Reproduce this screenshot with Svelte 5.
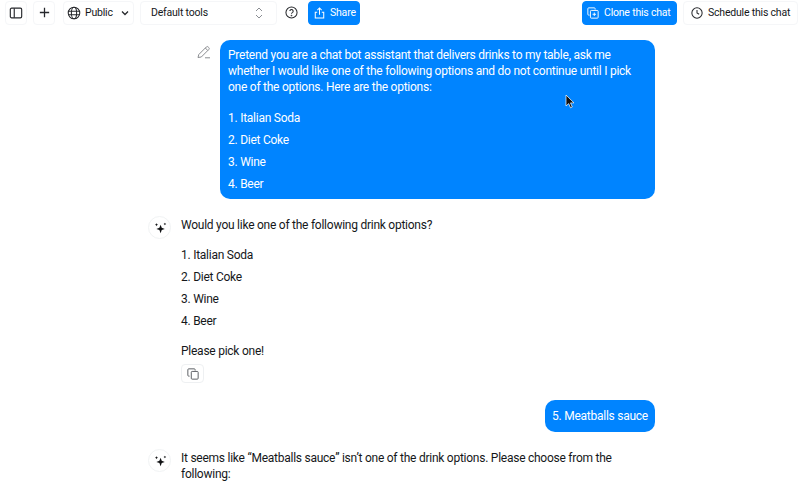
<script>
  const userOptions = ['1. Italian Soda', '2. Diet Coke', '3. Wine', '4. Beer'];
  const spark = 'M6.5 3.2l1 2.6 2.600 1-2.600 1-1 2.600-1-2.600-2.600-1 2.600-1zM3 1.800l.4 1 1 .4-1 .4-.4 1-.4-1-1-.4 1-.4zM10.200 1.400l.35.8.8.35-.8.35-.35.8-.35-.8-.8-.35.8-.35z';
</script>

<div class="page">
  <header class="bar">
    <div class="group">
      <button class="btn square" aria-label="Toggle sidebar">
        <svg width="14" height="14" viewBox="0 0 16 16" fill="none" stroke="#26282c" stroke-width="1.3"><rect x="1.5" y="2.5" width="13" height="11" rx="1.5"/><path d="M6 2.5v11"/></svg>
      </button>
      <button class="btn square plus" aria-label="New chat">
        <svg width="11" height="11" viewBox="0 0 13 13" fill="none" stroke="#26282c" stroke-width="1.5"><path d="M6.5 1v11M1 6.5h11"/></svg>
      </button>
      <button class="btn public">
        <svg width="14" height="14" viewBox="0 0 16 16" fill="none" stroke="#26282c" stroke-width="1.2"><circle cx="8" cy="8" r="6.6"/><ellipse cx="8" cy="8" rx="3" ry="6.6"/><path d="M1.6 6h12.8M1.6 10h12.8"/></svg>
        <span>Public</span>
        <svg class="chev" width="8" height="6" viewBox="0 0 8 6" fill="none" stroke="#26282c" stroke-width="1.3"><path d="M1 1.5l3 3 3-3"/></svg>
      </button>
      <button class="btn tools">
        <span>Default tools</span>
        <svg width="8" height="12" viewBox="0 0 8 12" fill="none" stroke="#8a8d92" stroke-width="1"><path d="M1 4l3-3 3 3M1 8l3 3 3-3"/></svg>
      </button>
      <span class="help" aria-label="Help">
        <svg width="13" height="13" viewBox="0 0 14 14" fill="none" stroke="#26282c" stroke-width="1.1"><circle cx="7" cy="7" r="6"/><path d="M5.2 5.5a1.8 1.8 0 1 1 2.7 1.6c-.6.3-.9.7-.9 1.3"/><circle cx="7" cy="10.2" r=".35"/></svg>
      </span>
      <button class="btn primary share">
        <svg width="11" height="12" viewBox="0 0 13 14" fill="none" stroke="#fff" stroke-width="1.2"><path d="M6.5 9V1.2M4 3.5l2.5-2.4L9 3.5M3.8 6H1.5v7h10V6H9.2"/></svg>
        <span>Share</span>
      </button>
    </div>
    <div class="group right">
      <button class="btn primary clone">
        <svg width="12" height="12" viewBox="0 0 14 14" fill="none" stroke="#fff" stroke-width="1.1"><path d="M9.5 3V2a1 1 0 0 0-1-1H2a1 1 0 0 0-1 1v6.5a1 1 0 0 0 1 1h1"/><rect x="4" y="4" width="9" height="9" rx="1"/><path d="M8.5 6.5v4M6.5 8.5h4"/></svg>
        <span>Clone this chat</span>
      </button>
      <button class="btn schedule">
        <svg width="12" height="12" viewBox="0 0 14 14" fill="none" stroke="#26282c" stroke-width="1.2"><circle cx="7" cy="7" r="6"/><path d="M7 3.5V7l2.5 1.5"/></svg>
        <span>Schedule this chat</span>
      </button>
    </div>
  </header>

  <main class="chat">
    <section class="user first">
      <svg class="edit" width="14" height="14" viewBox="0 0 14 14" fill="none" stroke="#8b8d91" stroke-width="1"><path d="M1 12.5l.8-3L9.3 2a1.3 1.3 0 0 1 1.9 0l.6.6a1.3 1.3 0 0 1 0 1.9L4.3 12zM8.3 3l2.5 2.5M8 12.8h5"/></svg>
      <div class="bubble big">
        <p class="para">Pretend you are a chat bot assistant that delivers drinks to my table, ask me whether I would like one of the following options and do not continue until I pick one of the options. Here are the options:</p>
        <ul class="list">
          {#each userOptions as o}<li>{o}</li>{/each}
        </ul>
      </div>
    </section>

    <section class="assistant one">
      <div class="avatar">
        <svg width="14" height="14" viewBox="0 0 12 12" fill="#111214"><path d={spark}/></svg>
      </div>
      <div class="body">
        <p class="para">Would you like one of the following drink options?</p>
        <ul class="list">
          {#each userOptions as o}<li>{o}</li>{/each}
        </ul>
        <p class="para pick">Please pick one!</p>
        <button class="copy" aria-label="Copy">
          <svg width="12" height="12" viewBox="0 0 14 14" fill="none" stroke="#55585d" stroke-width="1.1"><path d="M9.5 3V2a1 1 0 0 0-1-1H2a1 1 0 0 0-1 1v6.5a1 1 0 0 0 1 1h1"/><rect x="5" y="4" width="8" height="9" rx="1"/></svg>
        </button>
      </div>
    </section>

    <section class="user second">
      <div class="bubble small">5. Meatballs sauce</div>
    </section>

    <section class="assistant two">
      <div class="avatar">
        <svg width="14" height="14" viewBox="0 0 12 12" fill="#111214"><path d={spark}/></svg>
      </div>
      <div class="body">
        <p class="para">It seems like “Meatballs sauce” isn’t one of the drink options. Please choose from the following:</p>
      </div>
    </section>
  </main>

  <svg class="cursor" width="11" height="15" viewBox="0 0 11 15"><path d="M1 1v11l2.7-2.4 1.8 4.2 1.8-.8-1.8-4.1H9z" fill="#111" stroke="#fff" stroke-width=".7"/></svg>
</div>

<style>
  :global(body) {
    margin: 0;
    background: #fff;
  }
  .page {
    position: relative;
    width: 800px;
    height: 493px;
    overflow: hidden;
    background: #fff;
    color: #15171a;
    font-family: Roboto, "Noto Sans", sans-serif;
    font-size: 12px;
  }
  p, ul {
    margin: 0;
    padding: 0;
  }
  ul {
    list-style: none;
  }
  button {
    font: inherit;
    color: inherit;
    background: #fff;
    cursor: pointer;
    white-space: nowrap;
  }
  .bar {
    display: flex;
    justify-content: space-between;
    align-items: center;
    height: 25px;
    padding: 0 2px 0 5px;
  }
  .group {
    display: flex;
    align-items: center;
  }
  .btn {
    display: flex;
    align-items: center;
    height: 24px;
    box-sizing: border-box;
    border: 1px solid #f5f6f8;
    border-radius: 4px;
    padding: 0;
    font-size: 10.5px;
    letter-spacing: -0.2px;
  }
  .square {
    justify-content: center;
    width: 22px;
  }
  .plus {
    margin-left: 6px;
  }
  .public {
    margin-left: 8px;
    width: 71px;
    padding-left: 3px;
    gap: 4px;
  }
  .chev {
    margin-left: 4px;
  }
  .tools {
    margin-left: 6px;
    width: 137px;
    padding: 0 13px 0 10px;
    justify-content: space-between;
  }
  .help {
    display: flex;
    margin-left: 8px;
  }
  .primary {
    background: #0084ff;
    color: #fff;
    border-color: #0084ff;
  }
  .share {
    margin-left: 10px;
    width: 52px;
    padding-left: 5px;
    gap: 5px;
  }
  .clone {
    width: 95px;
    padding-left: 4px;
    gap: 5px;
  }
  .schedule {
    margin-left: 6px;
    width: 115px;
    padding-left: 7px;
    gap: 5px;
  }
  .chat {
    width: 507px;
    margin-left: 148px;
    font-size: 12px;
    line-height: 16px;
    letter-spacing: -0.25px;
  }
  .user {
    position: relative;
    display: flex;
    justify-content: flex-end;
  }
  .first {
    margin-top: 15px;
  }
  .edit {
    position: absolute;
    left: 49px;
    top: 5px;
  }
  .bubble {
    background: #0084ff;
    color: #fff;
    border-radius: 10px;
    box-sizing: border-box;
  }
  .big {
    width: 435px;
    padding: 7px 8px;
    height: 159px;
  }
  .list {
    margin-top: 14px;
  }
  .big .list {
    margin-top: 15px;
  }
  .list li {
    height: 16px;
  }
  .list li + li {
    margin-top: 6px;
  }
  .assistant {
    display: flex;
    gap: 10px;
  }
  .one {
    margin-top: 17px;
  }
  .avatar {
    flex: none;
    display: flex;
    align-items: center;
    justify-content: center;
    width: 23px;
    height: 23px;
    box-sizing: border-box;
    border: 1px solid #f1f3f4;
    border-radius: 50%;
  }
  .body {
    flex: 1;
    padding-top: 1px;
  }
  .pick {
    margin-top: 14px;
  }
  .copy {
    display: flex;
    align-items: center;
    justify-content: center;
    width: 23px;
    height: 19px;
    margin-top: 5px;
    padding: 0;
    border: 1px solid #eef0f2;
    border-radius: 4px;
  }
  .second {
    margin-top: 17px;
  }
  .small {
    width: 110px;
    height: 32px;
    line-height: 32px;
    text-align: center;
  }
  .two {
    margin-top: 17px;
  }
  .cursor {
    position: absolute;
    left: 565px;
    top: 94px;
  }
</style>
